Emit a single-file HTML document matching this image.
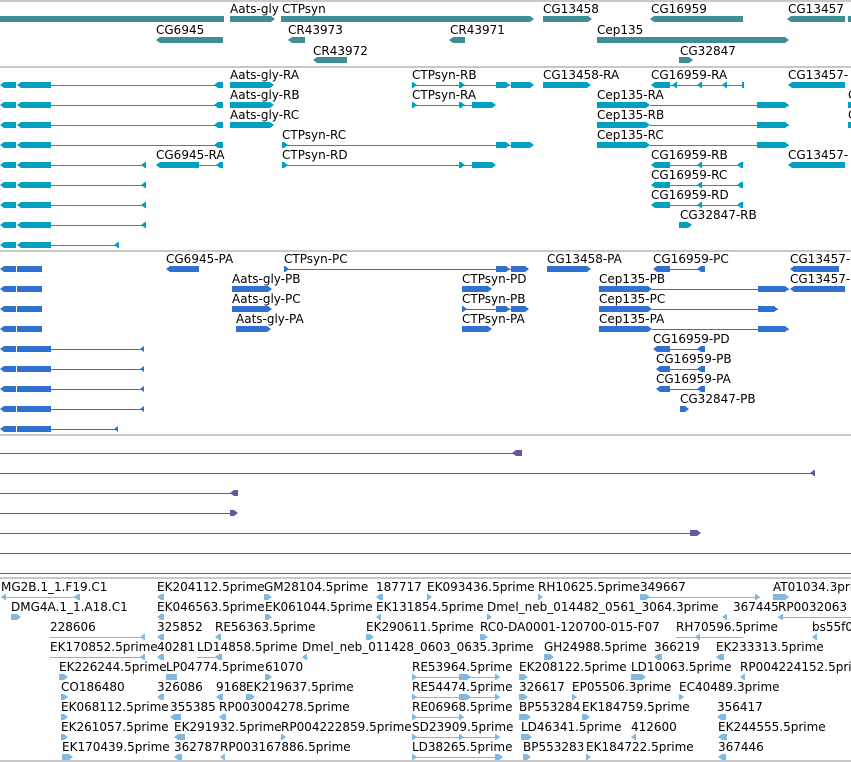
<!DOCTYPE html>
<html><head><meta charset="utf-8"><style>
body{margin:0;width:851px;height:762px;overflow:hidden;background:#fff;position:relative}
div{position:absolute}
.t{font:12px/14px "DejaVu Sans","Liberation Sans",sans-serif;color:#000;white-space:nowrap}
.b{height:6px}.l{height:1px}.g{height:2px;background:#c8c8c8;left:0;width:851px}
.k1{background:#3d8f95}.k2{background:#00a0c0}.k3{background:#3070d0}.k4{background:#6a55a0}.k5{background:#80b8e0}
.ar{clip-path:polygon(0 0,calc(100% - 4px) 0,100% 50%,calc(100% - 4px) 100%,0 100%)}
.al{clip-path:polygon(4px 0,100% 0,100% 100%,4px 100%,0 50%)}
.s{height:6px;width:5px}
</style></head><body>
<div class="g" style="top:0"></div>
<!-- section 1 genes -->
<div class="b k1" style="top:16px;left:0;width:224px"></div>
<div class="t" style="top:2px;left:230px">Aats-gly</div><div class="b k1 ar" style="top:16px;left:230px;width:45px"></div>
<div class="t" style="top:2px;left:282px">CTPsyn</div><div class="b k1 ar" style="top:16px;left:281px;width:253px"></div>
<div class="t" style="top:2px;left:543px">CG13458</div><div class="b k1 ar" style="top:16px;left:543px;width:49px"></div>
<div class="t" style="top:2px;left:651px">CG16959</div><div class="b k1 al" style="top:16px;left:650px;width:93px"></div>
<div class="t" style="top:2px;left:788px">CG13457</div><div class="b k1 al" style="top:16px;left:787px;width:58px"></div><div class="b k1" style="top:16px;left:848px;width:3px"></div>
<div class="t" style="top:23px;left:156px">CG6945</div><div class="b k1 al" style="top:37px;left:156px;width:67px"></div>
<div class="t" style="top:23px;left:288px">CR43973</div><div class="b k1 al" style="top:37px;left:288px;width:17px"></div>
<div class="t" style="top:23px;left:450px">CR43971</div><div class="b k1 al" style="top:37px;left:449px;width:16px"></div>
<div class="t" style="top:23px;left:597px">Cep135</div><div class="b k1 ar" style="top:37px;left:597px;width:192px"></div>
<div class="t" style="top:44px;left:313px">CR43972</div><div class="b k1 al" style="top:57px;left:313px;width:34px"></div>
<div class="t" style="top:44px;left:680px">CG32847</div><div class="b k1 ar" style="top:57px;left:679px;width:14px"></div>
<div class="g" style="top:66px"></div>
<!-- section 2 transcripts -->
<div class="b k2 al" style="top:82px;left:0;width:16px"></div><div class="b k2 al" style="top:82px;left:17px;width:34px"></div><div class="l k2" style="top:85px;left:51px;width:171px"></div><div class="b k2 al" style="top:82px;left:214px;width:9px"></div>
<div class="b k2 al" style="top:102px;left:0;width:16px"></div><div class="b k2 al" style="top:102px;left:17px;width:34px"></div><div class="l k2" style="top:105px;left:51px;width:171px"></div><div class="b k2 al" style="top:102px;left:214px;width:9px"></div>
<div class="b k2 al" style="top:122px;left:0;width:16px"></div><div class="b k2 al" style="top:122px;left:17px;width:34px"></div><div class="l k2" style="top:125px;left:51px;width:171px"></div><div class="b k2 al" style="top:122px;left:214px;width:9px"></div>
<div class="b k2 al" style="top:142px;left:0;width:16px"></div><div class="b k2 al" style="top:142px;left:17px;width:34px"></div><div class="l k2" style="top:145px;left:51px;width:171px"></div><div class="b k2 al" style="top:142px;left:214px;width:9px"></div>
<div class="b k2 al" style="top:162px;left:0;width:16px"></div><div class="b k2 al" style="top:162px;left:17px;width:34px"></div><div class="l k2" style="top:165px;left:51px;width:95px"></div><div class="b k2 al" style="top:162px;left:141px;width:5px"></div>
<div class="b k2 al" style="top:182px;left:0;width:16px"></div><div class="b k2 al" style="top:182px;left:17px;width:34px"></div><div class="l k2" style="top:185px;left:51px;width:95px"></div><div class="b k2 al" style="top:182px;left:141px;width:5px"></div>
<div class="b k2 al" style="top:202px;left:0;width:16px"></div><div class="b k2 al" style="top:202px;left:17px;width:34px"></div><div class="l k2" style="top:205px;left:51px;width:95px"></div><div class="b k2 al" style="top:202px;left:141px;width:5px"></div>
<div class="b k2 al" style="top:222px;left:0;width:16px"></div><div class="b k2 al" style="top:222px;left:17px;width:34px"></div><div class="l k2" style="top:225px;left:51px;width:95px"></div><div class="b k2 al" style="top:222px;left:141px;width:5px"></div>
<div class="b k2 al" style="top:242px;left:0;width:16px"></div><div class="b k2 al" style="top:242px;left:17px;width:34px"></div><div class="l k2" style="top:245px;left:51px;width:67px"></div><div class="b k2 al" style="top:242px;left:114px;width:5px"></div>

<div class="t" style="top:68px;left:230px">Aats-gly-RA</div><div class="b k2 ar" style="top:82px;left:230px;width:44px"></div>
<div class="t" style="top:88px;left:230px">Aats-gly-RB</div><div class="b k2 ar" style="top:102px;left:230px;width:44px"></div>
<div class="t" style="top:108px;left:230px">Aats-gly-RC</div><div class="b k2 ar" style="top:122px;left:230px;width:44px"></div>
<div class="t" style="top:68px;left:412px">CTPsyn-RB</div><div class="l k2" style="top:85px;left:412px;width:100px"></div><div class="b k2 ar" style="top:82px;left:412px;width:5px"></div><div class="b k2 ar" style="top:82px;left:459px;width:6px"></div><div class="b k2 ar" style="top:82px;left:496px;width:14px"></div><div class="b k2 ar" style="top:82px;left:511px;width:23px"></div>
<div class="t" style="top:88px;left:412px">CTPsyn-RA</div><div class="l k2" style="top:105px;left:412px;width:70px"></div><div class="b k2 ar" style="top:102px;left:412px;width:5px"></div><div class="b k2 ar" style="top:102px;left:459px;width:6px"></div><div class="b k2 ar" style="top:102px;left:472px;width:24px"></div>
<div class="t" style="top:128px;left:282px">CTPsyn-RC</div><div class="l k2" style="top:145px;left:282px;width:230px"></div><div class="b k2 ar" style="top:142px;left:282px;width:6px"></div><div class="b k2 ar" style="top:142px;left:496px;width:14px"></div><div class="b k2 ar" style="top:142px;left:511px;width:23px"></div>
<div class="t" style="top:148px;left:282px">CTPsyn-RD</div><div class="l k2" style="top:165px;left:282px;width:190px"></div><div class="b k2 ar" style="top:162px;left:282px;width:6px"></div><div class="b k2 ar" style="top:162px;left:459px;width:6px"></div><div class="b k2 ar" style="top:162px;left:472px;width:24px"></div>
<div class="t" style="top:148px;left:156px">CG6945-RA</div><div class="b k2 al" style="top:162px;left:156px;width:43px"></div><div class="l k2" style="top:165px;left:199px;width:24px"></div><div class="b k2 al" style="top:162px;left:216px;width:7px"></div>
<div class="t" style="top:68px;left:543px">CG13458-RA</div><div class="b k2 ar" style="top:82px;left:543px;width:48px"></div>
<div class="t" style="top:68px;left:651px">CG16959-RA</div><div class="b k2 al" style="top:82px;left:651px;width:19px"></div><div class="l k2" style="top:85px;left:670px;width:73px"></div><div class="b k2 al" style="top:82px;left:672px;width:5px"></div><div class="b k2 al" style="top:82px;left:697px;width:5px"></div><div class="b k2 al" style="top:82px;left:722px;width:5px"></div><div class="b k2" style="top:82px;left:742px;width:2px"></div>
<div class="t" style="top:148px;left:651px">CG16959-RB</div><div class="b k2 al" style="top:162px;left:651px;width:19px"></div><div class="l k2" style="top:165px;left:670px;width:73px"></div><div class="b k2 al" style="top:162px;left:697px;width:5px"></div><div class="b k2 al" style="top:162px;left:737px;width:6px"></div>
<div class="t" style="top:168px;left:651px">CG16959-RC</div><div class="b k2 al" style="top:182px;left:651px;width:19px"></div><div class="l k2" style="top:185px;left:670px;width:73px"></div><div class="b k2 al" style="top:182px;left:697px;width:5px"></div><div class="b k2 al" style="top:182px;left:737px;width:6px"></div>
<div class="t" style="top:188px;left:651px">CG16959-RD</div><div class="b k2 al" style="top:202px;left:651px;width:19px"></div><div class="l k2" style="top:205px;left:670px;width:73px"></div><div class="b k2 al" style="top:202px;left:697px;width:5px"></div><div class="b k2 al" style="top:202px;left:737px;width:6px"></div>
<div class="t" style="top:208px;left:680px">CG32847-RB</div><div class="b k2 ar" style="top:222px;left:679px;width:13px"></div>
<div class="t" style="top:88px;left:597px">Cep135-RA</div><div class="b k2 ar" style="top:102px;left:597px;width:53px"></div><div class="l k2" style="top:105px;left:650px;width:139px"></div><div class="b k2 ar" style="top:102px;left:757px;width:32px"></div>
<div class="t" style="top:108px;left:597px">Cep135-RB</div><div class="b k2 ar" style="top:122px;left:597px;width:53px"></div><div class="l k2" style="top:125px;left:650px;width:139px"></div><div class="b k2 ar" style="top:122px;left:757px;width:32px"></div>
<div class="t" style="top:128px;left:597px">Cep135-RC</div><div class="b k2 ar" style="top:142px;left:597px;width:53px"></div><div class="l k2" style="top:145px;left:650px;width:139px"></div><div class="b k2 ar" style="top:142px;left:757px;width:32px"></div>
<div class="t" style="top:68px;left:788px">CG13457-</div><div class="b k2 al" style="top:82px;left:788px;width:57px"></div>
<div class="t" style="top:148px;left:788px">CG13457-</div><div class="b k2 al" style="top:162px;left:788px;width:57px"></div>
<div class="t" style="top:88px;left:848px">C</div><div class="b k2" style="top:102px;left:848px;width:3px"></div>
<div class="t" style="top:108px;left:848px">C</div><div class="b k2" style="top:122px;left:848px;width:3px"></div>
<div class="g" style="top:250px"></div>
<!-- section 3 proteins -->
<div class="b k3 al" style="top:266px;left:0;width:16px"></div><div class="b k3" style="top:266px;left:17px;width:25px"></div>
<div class="b k3 al" style="top:286px;left:0;width:16px"></div><div class="b k3" style="top:286px;left:17px;width:25px"></div>
<div class="b k3 al" style="top:306px;left:0;width:16px"></div><div class="b k3" style="top:306px;left:17px;width:25px"></div>
<div class="b k3 al" style="top:326px;left:0;width:16px"></div><div class="b k3" style="top:326px;left:17px;width:25px"></div>
<div class="b k3 al" style="top:346px;left:0;width:16px"></div><div class="b k3" style="top:346px;left:17px;width:34px"></div><div class="l k3" style="top:349px;left:51px;width:93px"></div><div class="b k3 al" style="top:346px;left:140px;width:4px"></div>
<div class="b k3 al" style="top:366px;left:0;width:16px"></div><div class="b k3" style="top:366px;left:17px;width:34px"></div><div class="l k3" style="top:369px;left:51px;width:93px"></div><div class="b k3 al" style="top:366px;left:140px;width:4px"></div>
<div class="b k3 al" style="top:386px;left:0;width:16px"></div><div class="b k3" style="top:386px;left:17px;width:34px"></div><div class="l k3" style="top:389px;left:51px;width:93px"></div><div class="b k3 al" style="top:386px;left:140px;width:4px"></div>
<div class="b k3 al" style="top:406px;left:0;width:16px"></div><div class="b k3" style="top:406px;left:17px;width:34px"></div><div class="l k3" style="top:409px;left:51px;width:93px"></div><div class="b k3 al" style="top:406px;left:140px;width:4px"></div>
<div class="b k3 al" style="top:426px;left:0;width:16px"></div><div class="b k3" style="top:426px;left:17px;width:34px"></div><div class="l k3" style="top:429px;left:51px;width:67px"></div><div class="b k3 al" style="top:426px;left:114px;width:4px"></div>
<div class="t" style="top:252px;left:166px">CG6945-PA</div><div class="b k3 al" style="top:266px;left:166px;width:33px"></div>
<div class="t" style="top:252px;left:284px">CTPsyn-PC</div><div class="l k3" style="top:269px;left:284px;width:230px"></div><div class="b k3 ar" style="top:266px;left:284px;width:5px"></div><div class="b k3 ar" style="top:266px;left:496px;width:14px"></div><div class="b k3 ar" style="top:266px;left:511px;width:18px"></div>
<div class="t" style="top:272px;left:232px">Aats-gly-PB</div><div class="b k3 ar" style="top:286px;left:232px;width:40px"></div>
<div class="t" style="top:292px;left:232px">Aats-gly-PC</div><div class="b k3 ar" style="top:306px;left:232px;width:40px"></div>
<div class="t" style="top:312px;left:236px">Aats-gly-PA</div><div class="b k3 ar" style="top:326px;left:236px;width:35px"></div>
<div class="t" style="top:272px;left:462px">CTPsyn-PD</div><div class="b k3 ar" style="top:286px;left:462px;width:30px"></div>
<div class="t" style="top:292px;left:462px">CTPsyn-PB</div><div class="l k3" style="top:309px;left:462px;width:50px"></div><div class="b k3 ar" style="top:306px;left:462px;width:5px"></div><div class="b k3 ar" style="top:306px;left:496px;width:14px"></div><div class="b k3 ar" style="top:306px;left:511px;width:18px"></div>
<div class="t" style="top:312px;left:462px">CTPsyn-PA</div><div class="b k3 ar" style="top:326px;left:462px;width:30px"></div>
<div class="t" style="top:252px;left:547px">CG13458-PA</div><div class="b k3 ar" style="top:266px;left:547px;width:44px"></div>
<div class="t" style="top:252px;left:653px">CG16959-PC</div><div class="b k3 al" style="top:266px;left:653px;width:17px"></div><div class="l k3" style="top:269px;left:670px;width:35px"></div><div class="b k3 al" style="top:266px;left:697px;width:8px"></div>
<div class="t" style="top:272px;left:599px">Cep135-PB</div><div class="b k3 ar" style="top:286px;left:599px;width:53px"></div><div class="l k3" style="top:289px;left:652px;width:137px"></div><div class="b k3 ar" style="top:286px;left:758px;width:31px"></div>
<div class="t" style="top:292px;left:599px">Cep135-PC</div><div class="b k3 ar" style="top:306px;left:599px;width:53px"></div><div class="l k3" style="top:309px;left:652px;width:126px"></div><div class="b k3 ar" style="top:306px;left:758px;width:20px"></div>
<div class="t" style="top:312px;left:599px">Cep135-PA</div><div class="b k3 ar" style="top:326px;left:599px;width:53px"></div><div class="l k3" style="top:329px;left:652px;width:137px"></div><div class="b k3 ar" style="top:326px;left:758px;width:31px"></div>
<div class="t" style="top:252px;left:790px">CG13457-</div><div class="b k3 al" style="top:266px;left:790px;width:49px"></div>
<div class="t" style="top:272px;left:790px">CG13457-</div><div class="b k3 al" style="top:286px;left:790px;width:55px"></div>
<div class="t" style="top:332px;left:653px">CG16959-PD</div><div class="b k3 al" style="top:346px;left:653px;width:17px"></div><div class="l k3" style="top:349px;left:670px;width:35px"></div><div class="b k3 al" style="top:346px;left:697px;width:8px"></div>
<div class="t" style="top:352px;left:656px">CG16959-PB</div><div class="b k3 al" style="top:366px;left:656px;width:14px"></div><div class="l k3" style="top:369px;left:670px;width:35px"></div><div class="b k3 al" style="top:366px;left:697px;width:8px"></div>
<div class="t" style="top:372px;left:656px">CG16959-PA</div><div class="b k3 al" style="top:386px;left:656px;width:14px"></div><div class="l k3" style="top:389px;left:670px;width:35px"></div><div class="b k3 al" style="top:386px;left:697px;width:8px"></div>
<div class="t" style="top:392px;left:680px">CG32847-PB</div><div class="b k3 ar" style="top:406px;left:680px;width:9px"></div>
<div class="g" style="top:434px"></div>
<!-- purple -->
<div class="l k4" style="top:453px;left:0;width:515px"></div><div class="b k4 al" style="top:450px;left:512px;width:10px"></div>
<div class="l k4" style="top:473px;left:0;width:815px"></div><div class="b k4 al" style="top:470px;left:810px;width:5px"></div>
<div class="l k4" style="top:493px;left:0;width:235px"></div><div class="b k4 al" style="top:490px;left:230px;width:8px"></div>
<div class="l k4" style="top:513px;left:0;width:235px"></div><div class="b k4 ar" style="top:510px;left:230px;width:8px"></div>
<div class="l k4" style="top:533px;left:0;width:700px"></div><div class="b k4 ar" style="top:530px;left:690px;width:11px"></div>
<div class="l k4" style="top:553px;left:0;width:851px"></div>
<div class="l k4" style="top:573px;left:0;width:851px"></div>
<div class="g" style="top:577px"></div>
<!-- ESTs -->
<div class="t" style="top:580px;left:1px">MG2B.1_1.F19.C1</div><div class="l k5" style="top:597px;left:1px;width:79px"></div><div class="b k5 al" style="top:594px;left:1px;width:5px"></div><div class="b k5 al" style="top:594px;left:74px;width:6px"></div>
<div class="t" style="top:580px;left:157px">EK204112.5prime</div><div class="s k5 al" style="top:594px;left:157px;width:7px"></div>
<div class="t" style="top:580px;left:264px">GM28104.5prime</div><div class="s k5 ar" style="top:594px;left:264px;width:8px"></div>
<div class="t" style="top:580px;left:376px">187717</div><div class="s k5 al" style="top:594px;left:376px;width:7px"></div>
<div class="t" style="top:580px;left:427px">EK093436.5prime</div><div class="s k5 ar" style="top:594px;left:427px"></div>
<div class="t" style="top:580px;left:538px">RH10625.5prime</div><div class="s k5 ar" style="top:594px;left:538px"></div>
<div class="t" style="top:580px;left:640px">349667</div><div class="l k5" style="top:597px;left:640px;width:120px"></div><div class="b k5 ar" style="top:594px;left:640px;width:10px"></div><div class="b k5 ar" style="top:594px;left:755px;width:5px"></div>
<div class="t" style="top:580px;left:773px">AT01034.3prime</div><div class="b k5 ar" style="top:594px;left:773px;width:16px"></div>
<div class="t" style="top:600px;left:11px">DMG4A.1_1.A18.C1</div><div class="b k5 ar" style="top:614px;left:11px;width:10px"></div>
<div class="t" style="top:600px;left:157px">EK046563.5prime</div><div class="s k5 al" style="top:614px;left:157px;width:7px"></div>
<div class="t" style="top:600px;left:265px">EK061044.5prime</div><div class="s k5 ar" style="top:614px;left:265px;width:7px"></div>
<div class="t" style="top:600px;left:376px">EK131854.5prime</div><div class="s k5 al" style="top:614px;left:376px"></div>
<div class="t" style="top:600px;left:487px">Dmel_neb_014482_0561_3064.3prime</div><div class="s k5 ar" style="top:614px;left:487px"></div>
<div class="t" style="top:600px;left:733px">367445</div><div class="s k5 al" style="top:614px;left:722px"></div>
<div class="t" style="top:600px;left:778px">RP0032063</div><div class="l k5" style="top:617px;left:778px;width:73px"></div><div class="s k5 al" style="top:614px;left:778px"></div>
<div class="t" style="top:620px;left:50px">228606</div><div class="l k5" style="top:637px;left:50px;width:95px"></div><div class="s k5 al" style="top:634px;left:140px"></div>
<div class="t" style="top:620px;left:157px">325852</div><div class="s k5 al" style="top:634px;left:157px;width:7px"></div>
<div class="t" style="top:620px;left:215px">RE56363.5prime</div><div class="s k5 al" style="top:634px;left:215px;width:6px"></div>
<div class="t" style="top:620px;left:366px">EK290611.5prime</div><div class="s k5 ar" style="top:634px;left:366px;width:8px"></div>
<div class="t" style="top:620px;left:480px">RC0-DA0001-120700-015-F07</div><div class="s k5 ar" style="top:634px;left:480px;width:8px"></div>
<div class="t" style="top:620px;left:676px">RH70596.5prime</div><div class="l k5" style="top:637px;left:676px;width:67px"></div><div class="s k5 al" style="top:634px;left:695px"></div>
<div class="t" style="top:620px;left:812px">bs55f0</div><div class="s k5 al" style="top:634px;left:812px"></div>
<div class="t" style="top:640px;left:50px">EK170852.5prime</div><div class="l k5" style="top:657px;left:50px;width:95px"></div><div class="s k5 al" style="top:654px;left:140px"></div>
<div class="t" style="top:640px;left:157px">40281</div><div class="s k5 al" style="top:654px;left:157px;width:7px"></div>
<div class="t" style="top:640px;left:197px">LD14858.5prime</div><div class="l k5" style="top:657px;left:197px;width:25px"></div><div class="s k5 al" style="top:654px;left:215px;width:7px"></div>
<div class="t" style="top:640px;left:302px">Dmel_neb_011428_0603_0635.3prime</div><div class="s k5 al" style="top:654px;left:302px"></div>
<div class="t" style="top:640px;left:544px">GH24988.5prime</div><div class="s k5 ar" style="top:654px;left:544px;width:10px"></div>
<div class="t" style="top:640px;left:654px">366219</div><div class="s k5 al" style="top:654px;left:654px;width:8px"></div>
<div class="t" style="top:640px;left:716px">EK233313.5prime</div><div class="s k5 al" style="top:654px;left:716px;width:8px"></div>
<div class="t" style="top:660px;left:59px">EK226244.5prime</div><div class="s k5 ar" style="top:674px;left:59px;width:9px"></div>
<div class="t" style="top:660px;left:166px">LP04774.5prime</div><div class="s k5" style="top:674px;left:166px;width:11px"></div>
<div class="t" style="top:660px;left:265px">61070</div><div class="s k5 ar" style="top:674px;left:265px;width:7px"></div>
<div class="t" style="top:660px;left:412px">RE53964.5prime</div><div class="l k5" style="top:677px;left:412px;width:88px"></div><div class="s k5 ar" style="top:674px;left:412px"></div><div class="s k5 ar" style="top:674px;left:459px;width:12px"></div><div class="s k5 ar" style="top:674px;left:495px"></div>
<div class="t" style="top:660px;left:519px">EK208122.5prime</div><div class="s k5 ar" style="top:674px;left:519px;width:9px"></div>
<div class="t" style="top:660px;left:631px">LD10063.5prime</div><div class="s k5 ar" style="top:674px;left:631px;width:15px"></div>
<div class="t" style="top:660px;left:740px">RP004224152.5prime</div><div class="s k5 al" style="top:674px;left:740px"></div>
<div class="t" style="top:680px;left:61px">CO186480</div><div class="s k5 ar" style="top:694px;left:61px;width:7px"></div>
<div class="t" style="top:680px;left:157px">326086</div><div class="s k5 al" style="top:694px;left:157px;width:7px"></div>
<div class="t" style="top:680px;left:216px">9168</div><div class="s k5 al" style="top:694px;left:216px;width:7px"></div>
<div class="t" style="top:680px;left:246px">EK219637.5prime</div><div class="s k5 ar" style="top:694px;left:246px;width:9px"></div>
<div class="t" style="top:680px;left:412px">RE54474.5prime</div><div class="l k5" style="top:697px;left:412px;width:88px"></div><div class="s k5 ar" style="top:694px;left:412px"></div><div class="s k5 ar" style="top:694px;left:459px;width:12px"></div><div class="s k5 ar" style="top:694px;left:495px"></div>
<div class="t" style="top:680px;left:519px">326617</div><div class="s k5 ar" style="top:694px;left:519px;width:9px"></div>
<div class="t" style="top:680px;left:572px">EP05506.3prime</div><div class="s k5 ar" style="top:694px;left:572px"></div>
<div class="t" style="top:680px;left:679px">EC40489.3prime</div><div class="s k5 ar" style="top:694px;left:679px"></div>
<div class="t" style="top:700px;left:61px">EK068112.5prime</div><div class="s k5 ar" style="top:714px;left:61px;width:7px"></div>
<div class="t" style="top:700px;left:170px">355385</div><div class="s k5 al" style="top:714px;left:170px;width:11px"></div>
<div class="t" style="top:700px;left:219px">RP003004278.5prime</div><div class="s k5 al" style="top:714px;left:219px;width:7px"></div>
<div class="t" style="top:700px;left:412px">RE06968.5prime</div><div class="l k5" style="top:717px;left:412px;width:52px"></div><div class="s k5 ar" style="top:714px;left:412px"></div><div class="s k5 ar" style="top:714px;left:459px"></div>
<div class="t" style="top:700px;left:519px">BP553284</div><div class="s k5 ar" style="top:714px;left:519px;width:12px"></div>
<div class="t" style="top:700px;left:582px">EK184759.5prime</div><div class="s k5 ar" style="top:714px;left:582px;width:8px"></div>
<div class="t" style="top:700px;left:717px">356417</div><div class="s k5 al" style="top:714px;left:717px;width:9px"></div>
<div class="t" style="top:720px;left:61px">EK261057.5prime</div><div class="s k5 ar" style="top:734px;left:61px;width:7px"></div>
<div class="t" style="top:720px;left:174px">EK291932.5prime</div><div class="s k5 al" style="top:734px;left:174px;width:11px"></div>
<div class="t" style="top:720px;left:281px">RP004222859.5prime</div><div class="s k5 ar" style="top:734px;left:281px"></div>
<div class="t" style="top:720px;left:412px">SD23909.5prime</div><div class="l k5" style="top:737px;left:412px;width:88px"></div><div class="s k5 ar" style="top:734px;left:412px"></div><div class="s k5 ar" style="top:734px;left:459px"></div><div class="s k5 ar" style="top:734px;left:495px"></div>
<div class="t" style="top:720px;left:521px">LD46341.5prime</div><div class="s k5 ar" style="top:734px;left:521px;width:11px"></div>
<div class="t" style="top:720px;left:631px">412600</div><div class="s k5 al" style="top:734px;left:631px"></div>
<div class="t" style="top:720px;left:718px">EK244555.5prime</div><div class="s k5 al" style="top:734px;left:718px;width:9px"></div>
<div class="t" style="top:740px;left:62px">EK170439.5prime</div><div class="s k5 ar" style="top:754px;left:62px;width:11px"></div>
<div class="t" style="top:740px;left:174px">362787</div><div class="s k5 al" style="top:754px;left:174px;width:8px"></div>
<div class="t" style="top:740px;left:220px">RP003167886.5prime</div><div class="s k5 al" style="top:754px;left:220px"></div>
<div class="t" style="top:740px;left:412px">LD38265.5prime</div><div class="l k5" style="top:757px;left:412px;width:88px"></div><div class="s k5 ar" style="top:754px;left:412px"></div><div class="s k5 ar" style="top:754px;left:495px;width:8px"></div>
<div class="t" style="top:740px;left:523px">BP553283</div><div class="s k5 ar" style="top:754px;left:523px;width:8px"></div>
<div class="t" style="top:740px;left:586px">EK184722.5prime</div><div class="s k5 ar" style="top:754px;left:586px"></div>
<div class="t" style="top:740px;left:718px">367446</div><div class="s k5 al" style="top:754px;left:718px;width:8px"></div>
<div class="g" style="top:760px"></div>
</body></html>
